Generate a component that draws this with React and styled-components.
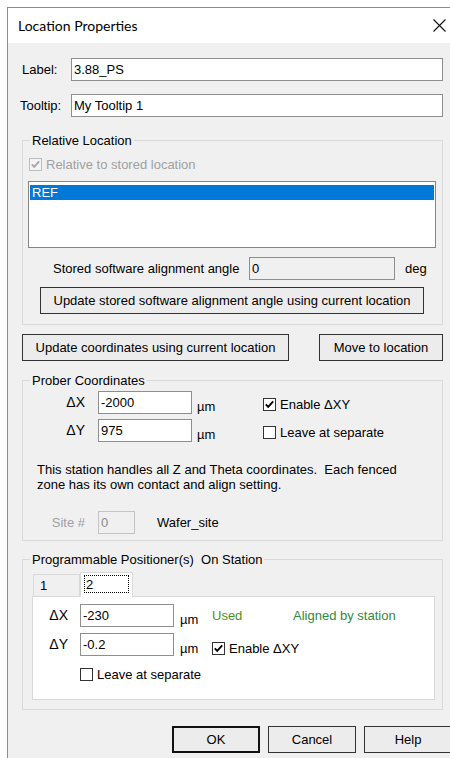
import React from 'react';
import styled, { createGlobalStyle } from 'styled-components';

const Global = createGlobalStyle`
  html, body { margin: 0; padding: 0; background: #fff; overflow: hidden; }
  body {
    font-family: "Liberation Sans", Arial, sans-serif;
    font-size: 13px;
    color: #000;
  }
  * { box-sizing: border-box; }
`;

const Window = styled.div`
  margin: 7px 0 0 7px;
  width: 443px;
  height: 760px;
  overflow: hidden;
  border-left: 1px solid #8c8c8c;
  border-top: 1px solid #8c8c8c;
  background: #f0f0f0;
`;

const TitleBar = styled.div`
  height: 35px;
  background: #fff;
  display: flex;
  align-items: center;
  justify-content: space-between;
  padding: 0 4px 0 10px;
`;

const Title = styled.span`
  font-family: Lato, "Liberation Sans", sans-serif;
  font-size: 14px;
  color: #000;
`;

const CloseGlyph = () => (
  <svg width="13" height="13" viewBox="0 0 13 13">
    <path d="M0.5 0.5 L12.5 12.5 M12.5 0.5 L0.5 12.5" stroke="#111" strokeWidth="1.1" fill="none" />
  </svg>
);

const Content = styled.div`
  padding: 15px 7px 0 14px;
`;

const FieldRow = styled.div`
  display: flex;
  align-items: center;
  margin-top: ${p => p.$mt || 0}px;
`;

const FieldLabel = styled.span`
  width: ${p => p.$w}px;
  margin-left: ${p => p.$shift || 0}px;
  line-height: 15px;
`;

const TextBox = styled.input`
  font: inherit;
  color: ${p => (p.$dim ? '#8a8a8a' : '#000')};
  width: ${p => (p.$w ? `${p.$w}px` : 'auto')};
  flex: ${p => (p.$w ? 'none' : '1')};
  height: 23px;
  margin: 0;
  padding: 0 0 0 2px;
  border: 1px solid ${p => (p.$dim ? '#c4c4c4' : '#8e8e8e')};
  background: ${p => (p.$disabled ? '#f0f0f0' : '#fff')};
  outline: none;
  min-width: 0;
`;

const GroupBox = styled.fieldset`
  margin: ${p => p.$mt}px 0 0;
  padding: 0 ${p => p.$pr}px ${p => p.$pb}px ${p => p.$pl}px;
  border: 1px solid #d9d9d9;
  min-width: 0;
`;

const Legend = styled.legend`
  margin-left: ${p => 7 - (p.$pl || 0)}px;
  padding: 0 2px;
  line-height: 15px;
  white-space: pre;
`;

const CheckRow = styled.div`
  display: flex;
  align-items: center;
  gap: 4px;
  line-height: 15px;
  height: 15px;
  margin-top: ${p => p.$mt || 0}px;
  margin-left: ${p => p.$ml || 0}px;
  color: ${p => (p.$disabled ? '#a0a0a0' : '#000')};
  grid-column: ${p => p.$col || 'auto'};
  align-self: ${p => p.$align || 'auto'};
`;

const Box = styled.span`
  width: 13px;
  height: 13px;
  flex: none;
  display: inline-flex;
  border: 1px solid ${p => (p.$disabled ? '#bcbcbc' : '#333')};
  background: ${p => (p.$disabled ? '#f4f4f4' : '#fff')};
`;

const CheckBox = ({ checked, disabled }) => (
  <Box $disabled={disabled}>
    {checked && (
      <svg width="11" height="11" viewBox="0 0 11 11">
        <path
          d="M1.8 5.4 L4.2 7.9 L9.2 2.4"
          stroke={disabled ? '#a8a8a8' : '#000'}
          strokeWidth="1.9"
          fill="none"
        />
      </svg>
    )}
  </Box>
);

const ListBox = styled.div`
  margin-top: 9px;
  height: 67px;
  border: 1px solid #858585;
  background: #fff;
  padding: 3px 1px 1px;
`;

const ListItem = styled.div`
  height: 15px;
  line-height: 15px;
  padding-left: 2px;
  background: ${p => (p.$selected ? '#0078d7' : 'transparent')};
  color: ${p => (p.$selected ? '#fff' : '#000')};
`;

const Unit = styled.span`
  margin-left: ${p => p.$ml || 0}px;
  line-height: 15px;
  align-self: ${p => p.$align || 'center'};
  color: ${p => p.$color || '#000'};
`;

const Button = styled.button`
  font: inherit;
  color: #000;
  width: ${p => p.$w}px;
  height: ${p => p.$h || 27}px;
  margin: ${p => p.$mt || 0}px 0 0 ${p => p.$ml || 0}px;
  padding: 0;
  background: #ececec;
  border: ${p => (p.$default ? '2px solid #111' : '1px solid #333')};
  flex: none;
`;

const ButtonRow = styled.div`
  display: flex;
  justify-content: ${p => p.$justify || 'flex-start'};
  gap: ${p => p.$gap || 0}px;
  margin-top: ${p => p.$mt}px;
  padding-left: ${p => p.$pl || 0}px;
  width: ${p => (p.$wide ? '460px' : 'auto')};
`;

const CoordGrid = styled.div`
  display: grid;
  grid-template-columns: ${p => p.$cols};
  row-gap: ${p => p.$gap}px;
  margin-top: ${p => p.$mt || 0}px;
  padding-top: ${p => p.$pt || 0}px;
`;

const AxisLabel = styled.span`
  text-align: right;
  padding-right: ${p => p.$pr}px;
  align-self: center;
  line-height: 15px;
  font-size: ${p => (p.$dim ? 13 : 14)}px;
  color: ${p => (p.$dim ? '#a0a0a0' : '#000')};
`;

const Note = styled.p`
  margin: 20px 0 0;
  padding-left: 14px;
  line-height: 15px;
  white-space: pre;
`;

const TabStrip = styled.div`
  display: flex;
  align-items: flex-end;
  margin-top: 5px;
  padding-left: 1px;
  height: 24px;
`;

const Tab = styled.div`
  position: relative;
  z-index: ${p => (p.$active ? 2 : 0)};
  width: ${p => p.$w}px;
  height: ${p => (p.$active ? 25 : 22)}px;
  margin-bottom: ${p => (p.$active ? -1 : 0)}px;
  background: ${p => (p.$active ? '#fff' : '#f0f0f0')};
  border: 1px solid #d9d9d9;
  border-bottom: none;
  padding: ${p => (p.$active ? '2px 3px 0 3px' : '3px 0 0 6px')};
  line-height: 15px;
`;

const FocusRing = styled.div`
  border: 1px dotted #000;
  height: 18px;
  padding: 1px 0 0 1px;
`;

const TabPanel = styled.div`
  height: 104px;
  background: #fff;
  border: 1px solid #d9d9d9;
`;

const App = () => (
  <>
    <Global />
    <Window>
      <TitleBar>
        <Title>Location Properties</Title>
        <CloseGlyph />
      </TitleBar>
      <Content>
        <FieldRow>
          <FieldLabel $w={49}>Label:</FieldLabel>
          <TextBox readOnly defaultValue="3.88_PS" />
        </FieldRow>
        <FieldRow $mt={13}>
          <FieldLabel $w={51} $shift={-2}>Tooltip:</FieldLabel>
          <TextBox readOnly defaultValue="My Tooltip 1" />
        </FieldRow>

        <GroupBox $mt={16} $pl={5} $pr={6} $pb={10}>
          <Legend $pl={5}>Relative Location</Legend>
          <CheckRow $mt={9} $ml={1} $disabled>
            <CheckBox checked disabled />
            <span>Relative to stored location</span>
          </CheckRow>
          <ListBox>
            <ListItem $selected>REF</ListItem>
          </ListBox>
          <FieldRow $mt={9}>
            <FieldLabel $w={196} $shift={25}>Stored software alignment angle</FieldLabel>
            <TextBox readOnly defaultValue="0" $w={146} $disabled />
            <Unit $ml={10}>deg</Unit>
          </FieldRow>
          <Button $w={384} $mt={7} $ml={12}>
            Update stored software alignment angle using current location
          </Button>
        </GroupBox>

        <ButtonRow $mt={9} $justify="space-between">
          <Button $w={267}>Update coordinates using current location</Button>
          <Button $w={124}>Move to location</Button>
        </ButtonRow>

        <GroupBox $mt={12} $pl={0} $pr={6} $pb={6}>
          <Legend>Prober Coordinates</Legend>
          <CoordGrid $cols="75px 94px 71px auto" $gap={5} $mt={3}>
            <AxisLabel $pr={13}>ΔX</AxisLabel>
            <TextBox readOnly defaultValue="-2000" $w={94} />
            <Unit $ml={5} $align="end">µm</Unit>
            <CheckRow $mt={6} $align="start">
              <CheckBox checked />
              <span>Enable ΔXY</span>
            </CheckRow>
            <AxisLabel $pr={13}>ΔY</AxisLabel>
            <TextBox readOnly defaultValue="975" $w={94} />
            <Unit $ml={5} $align="end">µm</Unit>
            <CheckRow $mt={6} $align="start">
              <CheckBox />
              <span>Leave at separate</span>
            </CheckRow>
          </CoordGrid>
          <Note>
            {'This station handles all Z and Theta coordinates.  Each fenced\nzone has its own contact and align setting.'}
          </Note>
          <CoordGrid $cols="75px 37px auto" $gap={0} $mt={19}>
            <AxisLabel $pr={13} $dim>Site #</AxisLabel>
            <TextBox readOnly defaultValue="0" $w={37} $disabled $dim />
            <Unit $ml={22}>Wafer_site</Unit>
          </CoordGrid>
        </GroupBox>

        <GroupBox $mt={11} $pl={9} $pr={7} $pb={9}>
          <Legend $pl={9}>{'Programmable Positioner(s)  On Station'}</Legend>
          <TabStrip>
            <Tab $w={47}>1</Tab>
            <Tab $w={53} $active>
              <FocusRing>2</FocusRing>
            </Tab>
          </TabStrip>
          <TabPanel>
            <CoordGrid $cols="47px 94px 38px 81px auto" $gap={6} $pt={7}>
              <AxisLabel $pr={12}>ΔX</AxisLabel>
              <TextBox readOnly defaultValue="-230" $w={94} />
              <Unit $ml={6} $align="end">µm</Unit>
              <Unit $color="#4f8f1e">Used</Unit>
              <Unit $color="#2e8a3c">Aligned by station</Unit>
              <AxisLabel $pr={12}>ΔY</AxisLabel>
              <TextBox readOnly defaultValue="-0.2" $w={94} />
              <Unit $ml={6} $align="end">µm</Unit>
              <CheckRow $col="4 / span 2" $align="end">
                <CheckBox checked />
                <span>Enable ΔXY</span>
              </CheckRow>
              <CheckRow $col="2 / span 3" $mt={5}>
                <CheckBox />
                <span>Leave at separate</span>
              </CheckRow>
            </CoordGrid>
          </TabPanel>
        </GroupBox>

        <ButtonRow $mt={16} $pl={150} $gap={8} $wide>
          <Button $w={88} $h={27} $default>OK</Button>
          <Button $w={88} $h={27}>Cancel</Button>
          <Button $w={88} $h={27}>Help</Button>
        </ButtonRow>
      </Content>
    </Window>
  </>
);

export default App;
